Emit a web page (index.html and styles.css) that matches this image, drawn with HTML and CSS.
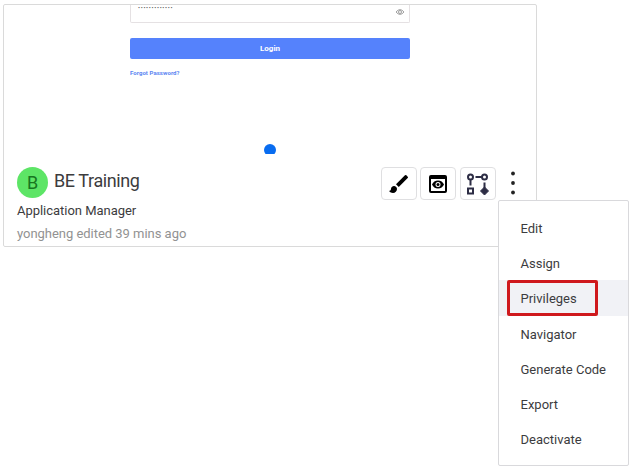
FILE: index.html
```html
<!DOCTYPE html>
<html lang="en">
<head>
<meta charset="utf-8">
<title>Applications</title>
<link rel="stylesheet" href="styles.css">
</head>
<body>
<article class="card">
  <div class="preview">
    <div class="field">
      <span class="mask">•••••••••••••</span>
      <svg class="eye" viewBox="0 0 10 8"><path d="M1 4Q5-.8 9 4Q5 8.800 1 4Z"/><circle cx="5" cy="4" r="1.500"/></svg>
    </div>
    <div class="login">Login</div>
    <div class="forgot">Forgot Password?</div>
    <div class="spot"></div>
  </div>
  <div class="info">
    <div class="head">
      <span class="avatar">B</span>
      <h1 class="title">BE Training</h1>
      <div class="tools">
        <button class="tool" aria-label="Design"><svg width="24" height="24" viewBox="0 0 24 24"><path fill="#000" d="M7 14c-1.660 0-3 1.340-3 3 0 1.310-1.160 2-2 2 .92 1.220 2.490 2 4 2 2.210 0 4-1.790 4-4 0-1.660-1.340-3-3-3zM20.710 4.630l-1.340-1.340a1 1 0 0 0-1.410 0L9 12.250 11.750 15l8.960-8.960a1 1 0 0 0 0-1.410z"/></svg></button>
        <button class="tool" aria-label="Preview"><svg width="24" height="24" viewBox="0 0 24 24"><path fill="#000" fill-rule="evenodd" d="M5 3h14a2 2 0 0 1 2 2v14a2 2 0 0 1-2 2H5a2 2 0 0 1-2-2V5a2 2 0 0 1 2-2zM5 7v12h14V7zM12 8.500c2.730 0 5.060 1.660 6 4-.94 2.340-3.270 4-6 4s-5.060-1.660-6-4c.94-2.340 3.270-4 6-4zm0 1.500a2.500 2.500 0 1 0 0 5 2.500 2.500 0 0 0 0-5z"/><circle cx="12" cy="12.500" r="1.500"/></svg></button>
        <button class="tool" aria-label="Flow"><svg width="24" height="24" viewBox="0 0 24 24"><g fill="none" stroke="#2d2d45" stroke-width="2"><circle cx="4.500" cy="5" r="2.500"/><circle cx="18.500" cy="5" r="2.500"/><path d="M4.500 7.500V13.500M9.500 5H16M18.500 10.500V16M2 16.500h5v5H2z"/></g><path fill="#2d2d45" stroke="#2d2d45" stroke-linejoin="round" d="M18.500 15l4 4-4 4-4-4z"/></svg></button>
        <svg class="more" width="6" height="24" viewBox="0 0 6 24"><circle cx="3" cy="2.500" r="1.900"/><circle cx="3" cy="12" r="1.900"/><circle cx="3" cy="21.500" r="1.900"/></svg>
      </div>
    </div>
    <p class="role">Application Manager</p>
    <p class="edited">yongheng edited 39 mins ago</p>
  </div>
</article>
<ul class="menu">
  <li>Edit</li>
  <li>Assign</li>
  <li class="active">Privileges</li>
  <li>Navigator</li>
  <li>Generate Code</li>
  <li>Export</li>
  <li>Deactivate</li>
</ul>
</body>
</html>
```
FILE: styles.css
```css
*, *::after { box-sizing: border-box; }
body {
  margin: 0;
  padding: 4px 0 0 3px;
  background: #fff;
  color: #3c3c3e;
  font-family: Roboto, "Liberation Sans", sans-serif;
}
.card {
  width: 534px;
  height: 243px;
  border: 1px solid #dadada;
  border-radius: 2px;
}
.preview {
  display: flex;
  flex-direction: column;
  height: 149px;
  padding-left: 126px;
  overflow: hidden;
}
.field {
  display: flex;
  flex: none;
  justify-content: space-between;
  width: 280px;
  height: 18px;
  padding: 0 4px 0 7px;
  border: 1px solid #e5e1e3;
  border-top: 0;
  border-radius: 0 0 2px 2px;
}
.mask {
  color: #555;
  font-size: 6px;
  line-height: 5px;
  letter-spacing: .68px;
}
.eye {
  width: 10px;
  height: 8px;
  margin-top: 3px;
  fill: none;
  stroke: #8a8a8a;
  stroke-width: .8;
}
.login {
  flex: none;
  width: 280px;
  height: 21px;
  margin-top: 15px;
  border-radius: 2px;
  background: #5582fc;
  color: #fff;
  font: 700 8px/22px Roboto, sans-serif;
  text-align: center;
}
.forgot {
  margin-top: 10px;
  color: #5a85f2;
  font-size: 6px;
  font-weight: 700;
  line-height: 8px;
  letter-spacing: .06px;
}
.spot {
  flex: none;
  width: 12px;
  height: 12px;
  margin: 67px 0 0 134px;
  border-radius: 50%;
  background: #086cf0;
}
.info { padding: 12px 0 0 13px; }
.head { display: flex; height: 34px; }
.avatar {
  width: 31px;
  height: 31px;
  margin-top: 1px;
  border-radius: 50%;
  background: #5de566;
  color: #17761f;
  font-size: 18px;
  line-height: 31px;
  text-align: center;
}
.title {
  width: 327px;
  margin: 0;
  padding-left: 6px;
  font-size: 18px;
  font-weight: 400;
  line-height: 30px;
  letter-spacing: -.4px;
}
.tools { display: flex; gap: 3.500px; margin-left: 5.500px; }
.tool {
  display: grid;
  place-items: center;
  width: 36px;
  height: 33px;
  margin-top: 1px;
  padding: 0;
  border: 1px solid #dfdfe1;
  border-radius: 4px;
  background: #fff;
}
.more { margin: 5px 0 0 11px; fill: #222; }
.role, .edited {
  margin: 0;
  font-size: 13px;
  line-height: 22px;
  letter-spacing: -.03px;
}
.edited { margin-top: 1px; color: #929292; }
.menu {
  position: absolute;
  top: 200px;
  left: 498px;
  width: 131px;
  height: 266px;
  margin: 0;
  padding: 9px 0;
  border: 1px solid #d9d9dc;
  border-radius: 2px;
  background: #fff;
  list-style: none;
}
.menu li {
  height: 35.200px;
  padding-left: 21.500px;
  font-size: 13px;
  line-height: 37px;
  letter-spacing: 0;
}
.menu .active { position: relative; background: #f1f2f6; }
.menu .active::after {
  content: "";
  position: absolute;
  top: -.4px;
  left: 8px;
  width: 91px;
  height: 36px;
  border: 3px solid #cf191d;
  border-radius: 2px;
}
```
